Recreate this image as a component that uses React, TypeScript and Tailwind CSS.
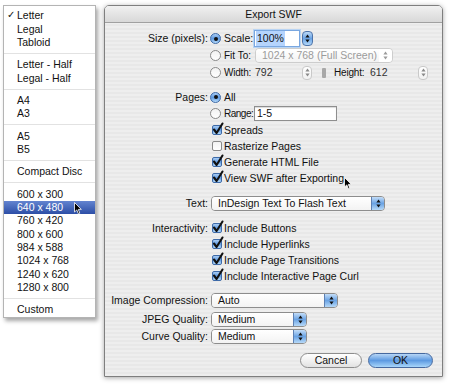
import React from 'react';

const sizeGroups = [
  ['Letter', 'Legal', 'Tabloid'],
  ['Letter - Half', 'Legal - Half'],
  ['A4', 'A3'],
  ['A5', 'B5'],
  ['Compact Disc'],
  ['600 x 300', '640 x 480', '760 x 420', '800 x 600', '984 x 588', '1024 x 768', '1240 x 620', '1280 x 800'],
  ['Custom'],
];

const Arrows = ({ color = '#111' }: { color?: string }) => (
  <svg width="5" height="9" viewBox="0 0 5 9">
    <path d="M2.5 0.6 L4.6 3.4 L0.4 3.4 Z" fill={color} />
    <path d="M2.5 8.4 L4.6 5.6 L0.4 5.6 Z" fill={color} />
  </svg>
);

const Cursor = () => (
  <svg width="8" height="13" viewBox="0 0 8 13">
    <path d="M0.5 0.5 L0.5 10 L2.8 7.9 L4.4 11.8 L5.8 11.2 L4.3 7.4 L7.3 7.4 Z" fill="#000" stroke="#fff" strokeWidth="0.8" />
  </svg>
);

const Radio = ({ on }: { on?: boolean }) =>
  on ? (
    <div className="flex h-[11px] w-[11px] items-center justify-center rounded-full border border-[#3d6aa8] bg-gradient-to-b from-[#a9cdf5] via-[#5f9ae0] to-[#b5dafa]">
      <div className="h-[4px] w-[4px] rounded-full bg-[#111]" />
    </div>
  ) : (
    <div className="h-[11px] w-[11px] rounded-full border border-[#8a8a8a] bg-gradient-to-b from-[#f2f2f2] to-white" />
  );

const Checkbox = ({ on }: { on?: boolean }) => (
  <div className="relative h-[10px] w-[10px]">
    {on ? (
      <>
        <div className="h-[10px] w-[10px] rounded-[2px] border border-[#3d6aa8] bg-gradient-to-b from-[#a9cdf5] via-[#5f9ae0] to-[#b5dafa]" />
        <svg className="absolute -top-[3px] left-[0px]" width="12" height="13" viewBox="0 0 12 13">
          <path d="M2 7.5 L4.6 11 L10.5 1.5" fill="none" stroke="#111" strokeWidth="2.1" strokeLinecap="round" strokeLinejoin="round" />
        </svg>
      </>
    ) : (
      <div className="h-[10px] w-[10px] rounded-[2px] border border-[#8a8a8a] bg-gradient-to-b from-[#f2f2f2] to-white" />
    )}
  </div>
);

const BlueStepper = ({ className }: { className: string }) => (
  <div className={`flex shrink-0 items-center justify-center rounded-[4px] border border-[#4d74ab] bg-gradient-to-b from-[#bcd9f7] via-[#6aa3e4] to-[#b2d7f8] ${className}`}>
    <Arrows />
  </div>
);

const GrayStepper = ({ className }: { className: string }) => (
  <div className={`flex shrink-0 items-center justify-center rounded-[4px] border border-[#c9c9c9] bg-gradient-to-b from-white to-[#f1f1f1] ${className}`}>
    <Arrows color="#8a8a8a" />
  </div>
);

const Popup = ({ label, className, disabled }: { label: string; className: string; disabled?: boolean }) => (
  <div
    className={`flex h-[15px] shrink-0 items-stretch overflow-hidden rounded-[4px] border ${
      disabled ? 'border-[#cdcdcd] text-[#9b9b9b]' : 'border-[#8d8d8d] text-[#111]'
    } ${className}`}
  >
    <div className="flex flex-1 items-center whitespace-nowrap bg-gradient-to-b from-white to-[#f3f3f3] pl-[6px]">{label}</div>
    {disabled ? (
      <div className="flex w-[13px] items-center justify-center bg-white">
        <Arrows color="#9b9b9b" />
      </div>
    ) : (
      <div className="flex w-[13px] items-center justify-center border-l border-[#5d80b3] bg-gradient-to-b from-[#c3ddf8] via-[#6aa3e4] to-[#b6d9f8]">
        <Arrows />
      </div>
    )}
  </div>
);

const Row = ({ label, className, children }: { label?: string; className: string; children: React.ReactNode }) => (
  <div className={`flex items-center whitespace-nowrap ${className}`}>
    <div className="w-[104px] shrink-0 pr-[1px] text-right">{label}</div>
    {children}
  </div>
);

const CheckRow = ({ label, on, className }: { label: string; on?: boolean; className: string }) => (
  <Row label="" className={className}>
    <div className="ml-[3px]">
      <Checkbox on={on} />
    </div>
    <span className="ml-[2px]">{label}</span>
  </Row>
);

export default function App() {
  return (
    <div className="relative flex h-[386px] w-[450px] items-start gap-[8px] overflow-hidden bg-white pl-[3px] pt-[5px] font-['Liberation_Sans',Arial,sans-serif] text-[10.5px] leading-none text-[#111]">
      {/* Page size menu */}
      <div className="flex w-[93px] flex-col border border-[#b4b4b4] bg-white pb-[1px] pt-[3px] shadow-[2px_3px_4px_rgba(0,0,0,0.35)]">
        {sizeGroups.map((group, gi) => (
          <React.Fragment key={gi}>
            {gi > 0 && (
              <div className="flex h-[9px] items-center">
                <div className="h-px w-full bg-[#e2e2e2]" />
              </div>
            )}
            {group.map((item) => {
              const active = item === '640 x 480';
              return (
                <div
                  key={item}
                  className={`relative flex h-[13.33px] items-center pl-[13px] ${
                    active ? 'bg-gradient-to-b from-[#6384d0] to-[#2d4ea6] text-white' : ''
                  }`}
                >
                  {item === 'Letter' && <span className="absolute left-[3px] top-[1px] text-[10px]">✓</span>}
                  {item}
                </div>
              );
            })}
          </React.Fragment>
        ))}
      </div>

      {/* Export SWF dialog */}
      <div className="flex h-[372px] w-[339px] flex-col rounded-t-[5px] border border-[#7f7f7f] bg-[repeating-linear-gradient(180deg,#eeeeee_0px,#eeeeee_2px,#e8e8e8_2px,#e8e8e8_4px)] shadow-[0_1px_5px_rgba(0,0,0,0.35)]">
        <div className="flex h-[17px] shrink-0 items-center justify-center rounded-t-[4px] border-b border-[#a0a0a0] bg-gradient-to-b from-[#f1f1f1] to-[#d8d8d8]">
          Export SWF
        </div>

        <Row label="Size (pixels):" className="mt-[7px] h-[17px]">
          <div className="ml-[1px]"><Radio on /></div>
          <span className="ml-[3px] w-[30px] shrink-0">Scale:</span>
          <div className="flex h-[17px] w-[46px] shrink-0 items-center border border-[#7aa7e0] bg-white pl-[1px] shadow-[0_0_0_1px_#b9d4f3]">
            <span className="bg-[#b5d4fd] px-[1px] py-[2px]">100%</span>
          </div>
          <BlueStepper className="ml-[2px] h-[15px] w-[11px]" />
        </Row>
        <Row label="" className="h-[17px]">
          <div className="ml-[1px]"><Radio /></div>
          <span className="ml-[3px] w-[31px] shrink-0 text-[10px]">Fit To:</span>
          <Popup label="1024 x 768 (Full Screen)" className="w-[138px]" disabled />
        </Row>
        <Row label="" className="h-[17px]">
          <div className="ml-[1px]"><Radio /></div>
          <span className="ml-[3px] w-[30px] shrink-0 text-[10px] tracking-[-0.2px]">Width:</span>
          <span className="w-[48px] shrink-0 pl-[1px] text-[#333]">792</span>
          <GrayStepper className="h-[14px] w-[10px]" />
          <div className="ml-[10px] h-[10px] w-[4px] shrink-0 rounded-[1px] bg-[#a8a8a8]" />
          <span className="ml-[8px] w-[36px] shrink-0 text-[10px] tracking-[-0.2px]">Height:</span>
          <span className="w-[48px] shrink-0 text-[#333]">612</span>
          <GrayStepper className="h-[14px] w-[10px]" />
        </Row>

        <Row label="Pages:" className="mt-[8px] h-[16px]">
          <div className="ml-[1px]"><Radio on /></div>
          <span className="ml-[3px]">All</span>
        </Row>
        <Row label="" className="h-[17px]">
          <div className="ml-[1px]"><Radio /></div>
          <span className="ml-[3px] w-[30px] shrink-0 text-[10px] tracking-[-0.5px]">Range:</span>
          <div className="flex h-[15px] w-[83px] shrink-0 items-center border border-[#8e8e8e] bg-white pl-[2px] shadow-[inset_0_1px_1px_rgba(0,0,0,0.15)]">
            1-5
          </div>
        </Row>
        <CheckRow label="Spreads" on className="h-[16px]" />
        <CheckRow label="Rasterize Pages" className="h-[16px]" />
        <CheckRow label="Generate HTML File" on className="h-[16px]" />
        <CheckRow label="View SWF after Exporting" on className="h-[16px]" />

        <Row label="Text:" className="mt-[8px] h-[18px]">
          <Popup label="InDesign Text To Flash Text" className="ml-[2px] w-[174px]" />
        </Row>

        <Row label="Interactivity:" className="mt-[8px] h-[16px]">
          <div className="ml-[3px]"><Checkbox on /></div>
          <span className="ml-[2px]">Include Buttons</span>
        </Row>
        <CheckRow label="Include Hyperlinks" on className="h-[16px]" />
        <CheckRow label="Include Page Transitions" on className="h-[16px]" />
        <CheckRow label="Include Interactive Page Curl" on className="h-[16px]" />

        <Row label="Image Compression:" className="mt-[8px] h-[16px]">
          <Popup label="Auto" className="ml-[2px] w-[127px]" />
        </Row>
        <Row label="JPEG Quality:" className="mt-[3px] h-[16px]">
          <Popup label="Medium" className="ml-[2px] w-[96px]" />
        </Row>
        <Row label="Curve Quality:" className="mt-[1px] h-[16px]">
          <Popup label="Medium" className="ml-[2px] w-[96px]" />
        </Row>

        <div className="mt-[9px] flex justify-end pr-[9px]">
          <div className="flex h-[15px] w-[62px] items-center justify-center rounded-full border border-[#8d8d8d] bg-gradient-to-b from-white via-[#f1f1f1] to-[#e2e2e2]">
            Cancel
          </div>
          <div className="ml-[6px] flex h-[15px] w-[65px] items-center justify-center rounded-full border border-[#46699f] bg-gradient-to-b from-[#b7d6f6] via-[#5d9ae1] to-[#a8d6fa]">
            OK
          </div>
        </div>
      </div>

      <div className="absolute left-[74px] top-[202px]">
        <Cursor />
      </div>
      <div className="absolute left-[344px] top-[177px]">
        <Cursor />
      </div>
    </div>
  );
}
